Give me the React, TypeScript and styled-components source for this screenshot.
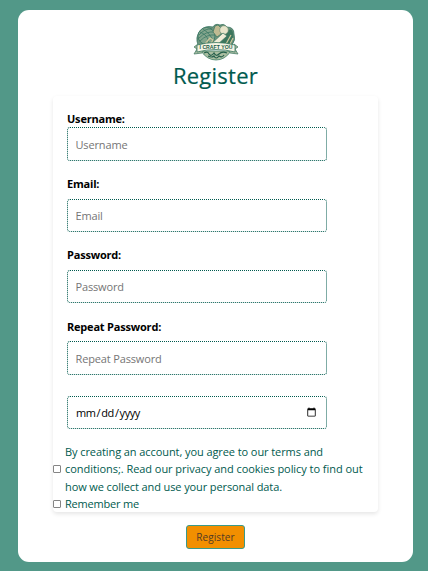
import React from 'react';
import styled, { createGlobalStyle } from 'styled-components';

const GlobalStyle = createGlobalStyle`
  * { box-sizing: border-box; }
  body {
    margin: 0;
    background: #529888;
    font-family: "Open Sans", "Noto Sans", sans-serif;
    color: #005a4e;
  }
`;

const Page = styled.main`
  height: 571px;
  padding: 10px 15px 9px 18px;
`;

const Card = styled.section`
  height: 552px;
  background: #fff;
  border-radius: 11px;
  display: flex;
  flex-direction: column;
  align-items: center;
  padding-top: 13px;
`;

const Logo = styled.svg`
  width: 46px;
  height: 39px;
  display: block;
  flex: none;
`;

const Title = styled.h1`
  margin: 0;
  height: 34px;
  line-height: 26px;
  font-size: 22px;
  font-weight: 400;
  letter-spacing: 0.25px;
  -webkit-text-stroke: 0.2px #005a4e;
`;

const Form = styled.form`
  width: 325px;
  height: 416px;
  border-radius: 4px;
  box-shadow: 0 2px 4px rgba(0, 0, 0, 0.1);
`;

const Field = styled.div<{ $height: number }>`
  height: ${(p) => p.$height}px;
  padding-left: 14px;
  display: flex;
  flex-direction: column;
  justify-content: flex-end;
`;

const Label = styled.label<{ $gap: number }>`
  font-size: 11px;
  line-height: 16px;
  font-weight: 700;
  color: #000;
  margin-bottom: ${(p) => p.$gap}px;
  letter-spacing: -0.2px;
`;

const Input = styled.input<{ $height?: number }>`
  width: 260px;
  height: ${(p) => p.$height ?? 34}px;
  flex: none;
  padding: 0 7px 0 7.5px;
  border: 1px dotted #005a4e;
  border-radius: 3px;
  background: #fff;
  color: #000;
  font: 400 11px "Open Sans", "Noto Sans", sans-serif;
  letter-spacing: -0.15px;
  outline: none;

  &::placeholder { color: #757575; }
`;

const DateInput = styled(Input)`
  padding-left: 7px;
  letter-spacing: -0.4px;
`;

const Consent = styled.div<{ $top?: number }>`
  display: flex;
  align-items: center;
  margin-top: ${(p) => p.$top ?? 0}px;
`;

const Checkbox = styled.input`
  width: 8px;
  height: 8px;
  margin: 0 4px 0 0;
  appearance: none;
  border: 1px solid #858585;
  border-radius: 1px;
  background: #fff;
  flex: none;
`;

const ConsentText = styled.span`
  font-size: 11px;
  line-height: 17.33px;
  white-space: nowrap;
`;

const Line = styled.span<{ $spacing: number }>`
  display: block;
  letter-spacing: ${(p) => p.$spacing}px;
`;

const Submit = styled.button`
  margin-top: 13px;
  width: 59px;
  height: 24px;
  padding: 0 0 1px;
  border: 1px solid #39998a;
  border-radius: 3px;
  background: #f28f00;
  color: #523b26;
  font: 400 10px "Open Sans", "Noto Sans", sans-serif;
  letter-spacing: 0.08px;
`;

function CraftLogo() {
  return (
    <Logo viewBox="0 0 46 39" role="img" aria-label="I Craft You">
      <path d="M8 28Q14 37 23 37Q32 37 38 28Z" fill="#a9bda0" stroke="#2f745c" strokeWidth=".7" />
      <path d="M11 30q4-2 5 1q2 3 5-1q2 4 5 1q3-3 8-1M15 33q4 2 6 0q2 4 5 0q3 2 5-1" fill="none" stroke="#245f4c" strokeWidth="1.2" />
      <path d="M5 22Q2 14 7 8Q12 2 20 4Q22 0 27 2Q31 0 34 4Q41 4 41 11Q43 17 39 22Z" fill="#6d947e" stroke="#2a6a55" strokeWidth=".7" />
      <circle cx="13.5" cy="13" r="8.5" fill="#83a58c" stroke="#337461" strokeWidth=".8" />
      <path d="M6 12Q12 5 19 6M6 15Q13 8 22 9M7 18Q14 11 22 12M10 6Q19 12 20 19M7 9Q15 12 16 20" fill="none" stroke="#3c7966" strokeWidth=".8" />
      <path d="M22 3l3-1 3 3v6l-4 3-4-5z" fill="#bfba92" stroke="#3d765f" strokeWidth=".7" />
      <path d="M27 20l8-13q5-2 5 4q1 6-3 11z" fill="#3c765d" />
      <circle cx="31" cy="7" r="4.3" fill="#e9e5cb" stroke="#6b8d72" strokeWidth=".6" />
      <path d="M17 22L30 10l4 3-10 9z" fill="#f0ecd7" stroke="#397660" strokeWidth=".7" />
      <path d="M12 21l5-6 3 2-3 5M33 21l5-9M37 21l3-6" fill="none" stroke="#d1c79c" strokeWidth="1.2" />
      <path d="M5 21L1 24l3 2-3 5 8-1 2-4M41 21l4 3-3 2 3 5-8-1-2-4" fill="#a6baa0" stroke="#4c8069" strokeWidth=".8" />
      <path d="M4 22Q23 17 42 22V29Q23 24 4 29Z" fill="#f6f4e4" stroke="#387760" strokeWidth=".8" />
      <text x="23" y="26.2" textAnchor="middle" fontFamily="Liberation Sans, sans-serif" fontSize="5.2" fontWeight="700" fill="#245c48" textLength="33">I CRAFT YOU</text>
    </Logo>
  );
}

export default function App() {
  return (
    <>
      <GlobalStyle />
      <Page>
        <Card>
          <CraftLogo />
          <Title>Register</Title>
          <Form>
            <Field $height={65}>
              <Label htmlFor="username" $gap={0}>Username:</Label>
              <Input id="username" placeholder="Username" />
            </Field>
            <Field $height={71}>
              <Label htmlFor="email" $gap={7}>Email:</Label>
              <Input id="email" placeholder="Email" $height={33} />
            </Field>
            <Field $height={71}>
              <Label htmlFor="password" $gap={7}>Password:</Label>
              <Input id="password" type="password" placeholder="Password" $height={33} />
            </Field>
            <Field $height={72}>
              <Label htmlFor="repeat" $gap={6}>Repeat Password:</Label>
              <Input id="repeat" type="password" placeholder="Repeat Password" />
            </Field>
            <Field $height={54}>
              <DateInput type="date" aria-label="Date of birth" $height={33} />
            </Field>
            <Consent $top={14}>
              <Checkbox type="checkbox" id="terms" />
              <ConsentText>
                <Line $spacing={-0.08}>By creating an account, you agree to our terms and</Line>
                <Line $spacing={-0.05}>conditions;. Read our privacy and cookies policy to find out</Line>
                <Line $spacing={-0.1}>how we collect and use your personal data.</Line>
              </ConsentText>
            </Consent>
            <Consent>
              <Checkbox type="checkbox" id="remember" />
              <ConsentText>
                <Line $spacing={-0.2}>Remember me</Line>
              </ConsentText>
            </Consent>
          </Form>
          <Submit type="button">Register</Submit>
        </Card>
      </Page>
    </>
  );
}
